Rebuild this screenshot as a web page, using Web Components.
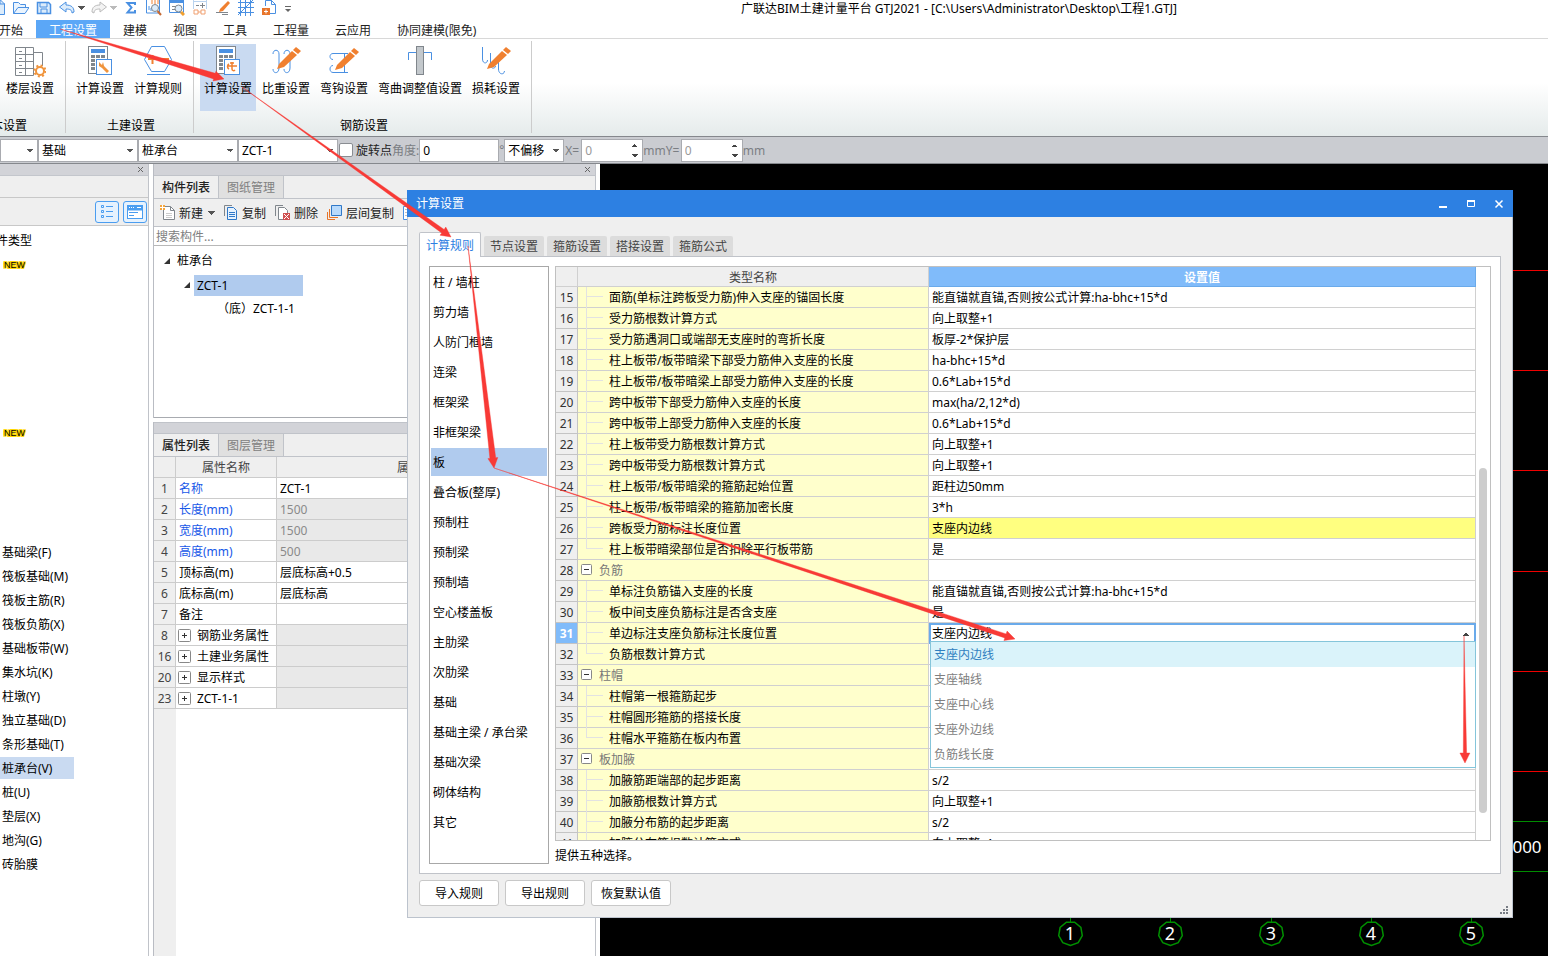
<!DOCTYPE html>
<html lang="zh-CN">
<head>
<meta charset="utf-8">
<title>广联达BIM土建计量平台 GTJ2021</title>
<style>
html,body{height:100%;margin:0}
body{font:12px/18px "Noto Sans","Noto Sans CJK SC",sans-serif;color:#000;background:#fff;overflow:hidden}
</style>
</head>
<body>
<gtj-app></gtj-app>
<script>
const BASE = `*{box-sizing:border-box}button,input,select{font:inherit;color:inherit;margin:0;padding:0;border:0;background:none;border-radius:0;outline:0}
ul{list-style:none;margin:0;padding:0}svg{display:block;flex:none}
.down{width:7px;height:4px;background:conic-gradient(from 315deg at 50% 100%,currentColor 90deg,transparent 0);flex:none}`;

function define(name, css, html){
  customElements.define(name, class extends HTMLElement{
    constructor(){
      super();
      const t = document.createElement('template');
      t.innerHTML = `<style>${BASE}${css}</style>${typeof html === 'function' ? html(this) : html}`;
      this.attachShadow({mode:'open'}).append(t.content.cloneNode(true));
    }
  });
}
const svg = (w,h,body) => `<svg width="${w}" height="${h}" viewBox="0 0 ${w} ${h}" fill="none" stroke-width="1" aria-hidden="true">${body}</svg>`;
const pencil = (x,y) => `<g transform="translate(${x} ${y})" fill="#f08030" stroke="none"><path d="M2 17 15 4 20 8 7 20 0 22Z"/><path d="M16 3 19 0 24 4 21 7Z"/></g>`;
const calc = `<rect x=".5" y=".5" width="19" height="27" fill="#fff" stroke="#80868c"/><rect x="3" y="3" width="14" height="4" fill="#4a90e2"/><g fill="#80868c"><path d="M3 9h4v3H3zM8 9h4v3H8zM13 9h4v3h-4zM3 13h4v3H3zM3 17h4v3H3zM3 21h4v3H3z"/></g><rect x="8.5" y="13.5" width="15" height="15" fill="#fff" stroke="#4a90e2"/>`;

/* ---------- title row ---------- */
define('quick-bar', `
:host{display:flex;height:20px;align-items:flex-start;background:#fff;overflow:hidden}
.tools{display:flex;gap:7px;margin-left:-10px;flex:none}
.tools button{height:16px;width:16px;flex:none}
.tools .drop{width:25px;display:flex;align-items:center;gap:3px;color:#555}
.tools .off{color:#bbb}
h1{flex:1;font:inherit;line-height:18px;margin:0;padding-left:70px;text-align:center;white-space:nowrap}`,
`<div class="tools">
<button aria-label="新建">${svg(16,16,'<path d="M2 14.5h12.5V4l-4-4H2M10 0v4h5" stroke="#4a90e2" fill="#dcecfb"/>')}</button>
<button aria-label="打开">${svg(16,16,'<path d="M.5 13.500V2.500h5l2 2h5v3M.5 13.500 5 7.500h11l-4 6z" stroke="#4a90e2" fill="#eaf4fe"/>')}</button>
<button aria-label="保存">${svg(16,16,'<path d="M1.500 2.500h11l2 2v9h-13z" stroke="#4a90e2" stroke-width="1.500" fill="#dcecfb"/><path d="M4 3v4h7V3M5 13v-4h6v4" stroke="#4a90e2"/>')}</button>
<button class="drop" aria-label="撤销">${svg(16,16,'<path d="M.5 7 7 2v3c5 0 8 2 8 7l-2 1c0-3-2-4-6-4v3z" stroke="#4a90e2" fill="#dcecfb"/>')}<span class="down"></span></button>
<button class="drop off" aria-label="恢复">${svg(16,16,'<path d="M15.500 7 9 2v3c-5 0-8 2-8 7l2 1c0-3 2-4 6-4v3z" stroke="#bbb" fill="#f3f3f3"/>')}<span class="down"></span></button>
<button aria-label="汇总计算">${svg(16,16,'<path d="M12 5V3H4.500l4 4.500-4 5H12V10" stroke="#4a90e2" stroke-width="2"/>')}</button>
<button aria-label="查看报表">${svg(16,16,'<path d="M.5-1v14h13V-1" stroke="#4a90e2"/><path d="M3 10V6M5 11V8" stroke="#4a90e2"/><path d="M5 1h8M5 3h8" stroke="#f08030" stroke-dasharray="2 1"/><circle cx="9" cy="8" r="3.500" fill="#dcecfb" stroke="#80868c"/><path d="m11.500 11 3.500 4" stroke="#c66a34" stroke-width="2"/>')}</button>
<button aria-label="查看计算式">${svg(16,16,'<path d="M.5.5h14v12H.5z" stroke="#4a90e2" fill="#fff"/><path d="M0 1.500h15" stroke="#4a90e2" stroke-width="3"/><path d="M3 6.500h4M3 9.500h3" stroke="#80868c"/><circle cx="9.500" cy="8.500" r="3.500" fill="#dcecfb" stroke="#80868c"/><path d="m12 12 3 3" stroke="#f0a030" stroke-width="3"/>')}</button>
<button aria-label="查看工程量">${svg(16,16,'<path d="M1.500-1v10M14.500-1v10M1 1.500h13" stroke="#b9d3ef"/><path d="M4 5.500h3M10.500 3v5M8 5.500h5" stroke="#80868c"/><path d="M2 10h4v4H2zM9 10h4v4H9zM6 12h3" stroke="#f0a070"/>')}</button>
<button aria-label="标注">${svg(16,16,'<path d="M5 9 13 1l2 2-7 8-4 1z" fill="#f08030"/><path d="M1 12.500h12M7 14.500h6" stroke="#80868c"/>')}</button>
<button aria-label="轴网">${svg(16,16,'<path d="M0 2.500h16M0 7.500h16M0 12.500h16M2.500 0v16M7.500 0v16M12.500 0v16M0 15 15 0" stroke="#4a90e2"/>')}</button>
<button aria-label="导入">${svg(16,16,'<path d="M4.500 6V.5h6l4 4v9H9" stroke="#4a90e2"/><path d="M10.500 0v4.500h4" stroke="#4a90e2"/><rect x="1" y="8" width="8" height="7" fill="#e8752a"/><path d="M3 11.500h4M5 9.500v4" stroke="#fff"/>')}</button>
<button aria-label="自定义">${svg(16,16,'<path d="M1 6.500h6" stroke="#666"/><path d="M1 9h6l-3 3z" fill="#666"/>')}</button>
</div>
<h1>广联达BIM土建计量平台 GTJ2021 - [C:\\Users\\Administrator\\Desktop\\工程1.GTJ]</h1>`.replaceAll('.500','.5'));

define('ribbon-tabs', `
:host{display:flex;height:19px;border-bottom:1px solid #d8d8d8;background:#fff;overflow:hidden;color:#222}
nav{display:flex;margin-left:-14px}
button{padding:2px 13px 0;line-height:17px;white-space:nowrap}
button[aria-current]{background:#5ba7f7;color:#fff}`,
`<nav>${['开始','工程设置','建模','视图','工具','工程量','云应用','协同建模(限免)'].map((t,i)=>`<button${i===1?' aria-current="page"':''}>${t}</button>`).join('')}</nav>`);

/* ---------- ribbon ---------- */
define('ribbon-button', `
:host{display:block}
button{display:flex;flex-direction:column;align-items:center;width:100%;height:67px;padding:2px 4px;gap:2px;white-space:nowrap}
:host([active]) button{background:#c9daf1}
.icon{height:32px;display:flex}`,
`<button><span class="icon"><slot name="icon"></slot></span><slot></slot></button>`);

define('ribbon-group', `
:host{display:flex;flex-direction:column;padding:0 8px 0 6px;background:linear-gradient(#ccc,#ccc) right 2px/1px 92px no-repeat}
.row{display:flex;gap:2px;padding-top:5px;height:78px}
.name{text-align:center;line-height:18px;white-space:nowrap;padding-left:4px}
:host([cut]){padding-left:2px}
:host([cut]) .name{text-align:left;margin-left:-15px}`,
el=>`<div class="row"><slot></slot></div><div class="name">${el.getAttribute('label')}</div>`);

define('ribbon-panel', `
:host{display:flex;height:97px;background:linear-gradient(#fff 45%,#e5ebeb);overflow:hidden}`,
`<ribbon-group label="本设置" cut>
 <ribbon-button><span slot="icon">${svg(32,32,'<path d="M1.5 1.5h18v28h-18zM1.5 8.5h18M1.5 15.500h18M1.5 22.500h18M11.5 1.5v28M20 6.5h8.5V20" stroke="#80868c"/><path d="M5 5.5h3M5 12.500h3M5 19.500h3M5 26.500h3" stroke="#80868c"/><circle cx="26" cy="25" r="4" stroke="#f0943c" stroke-width="2" fill="#fff"/><circle cx="26" cy="25" r="5.500" stroke="#f0943c" stroke-dasharray="2 2.300" stroke-width="2"/>')}</span>楼层设置</ribbon-button>
</ribbon-group>
<ribbon-group label="土建设置">
 <ribbon-button><span slot="icon">${svg(26,32,`<g transform="translate(1 0)">${calc}<path d="M11 16v4l3 2 5 5 2-2-5-5-1-4-1 3z" fill="#f0943c"/></g>`)}</span>计算设置</ribbon-button>
 <ribbon-button><span slot="icon">${svg(30,32,'<path d="M8.5.5h13l7 13-7 12h-13l-7-12z" stroke="#4a90e2"/><path d="M4 28.500h23" stroke="#4a90e2"/><path d="M5 13h9M9.5 9v9M17 13h9" stroke="#f08030" stroke-width="2"/>')}</span>计算规则</ribbon-button>
</ribbon-group>
<ribbon-group label="钢筋设置">
 <ribbon-button active><span slot="icon">${svg(26,32,`<g transform="translate(1 0)">${calc}<path d="M11 20h10M16 16v7c0 2 2 2 3 1M13 18c-2 1-2 4 0 5M14 17h4" stroke="#f08030" stroke-width="1.500"/></g>`)}</span>计算设置</ribbon-button>
 <ribbon-button><span slot="icon">${svg(30,32,`<path d="M2 8c0-5 6-5 6 0v14c0 6-6 6-6 1M13 8c0-5 6-5 6 0v14c0 6-6 6-6 1" stroke="#4a90e2"/>${pencil(6,1)}`)}</span>比重设置</ribbon-button>
 <ribbon-button><span slot="icon">${svg(30,32,`<path d="M19 7.500H4c-4 0-4 6 0 6M19 26.500H4c-4 0-4-7 0-7M15.500 7v19" stroke="#4a90e2"/>${pencil(6,2)}`)}</span>弯钩设置</ribbon-button>
 <ribbon-button><span slot="icon">${svg(30,32,'<path d="M3.500 14V6.500h23V14" stroke="#4a90e2"/><rect x="11.500" y=".5" width="7" height="28" fill="#c3c8cc" stroke="#80868c"/>')}</span>弯曲调整值设置</ribbon-button>
 <ribbon-button><span slot="icon">${svg(30,32,`<path d="M1.500 1v12c0 5 5 5 5 1M9.500 7v12c0 4 5 4 5 1M17.500 14v9c0 6 6 6 6 2" stroke="#4a90e2"/>${pencil(6,1)}`)}</span>损耗设置</ribbon-button>
</ribbon-group>`.replaceAll('.500','.5').replaceAll('.300','.3'));

/* ---------- option bar ---------- */
define('option-bar', `
:host{display:flex;align-items:center;height:28px;background:#caccd1;border-top:1px solid #85888d;border-bottom:1px solid #85888d;color:#7b7e83;white-space:nowrap;overflow:hidden}
select,.t{height:23px;border:1px solid #a9abb0;background:#fff;appearance:none;padding:0 3px;color:#000;flex:none}
select{padding-top:1px;background:#fff conic-gradient(from 315deg at 50% 100%,#555 90deg,transparent 0) right 4px center/6px 3px no-repeat;width:100px}
select.first{width:38px}select.off{width:60px;margin-right:1px}
input[type=checkbox]{appearance:none;width:14px;height:14px;border:1px solid #8a8d92;background:#fff;border-radius:2px;margin:0 3px 0 1px;flex:none}
label{display:flex;align-items:center;color:#222}
label span,label.g,.u{padding-top:2px}
label.g{color:#7b7e83}
.t{width:80px}
.deg{width:5px;overflow:hidden}
.n{width:62px;color:#9a9a9a;background:conic-gradient(from 315deg at 50% 100%,#444 90deg,transparent 0) right 4px bottom 4px/6px 3px no-repeat,conic-gradient(from 135deg at 50% 0,#444 90deg,transparent 0) right 4px top 4px/6px 3px no-repeat,#fff}
.n::-webkit-inner-spin-button{display:none}
.x{width:16px}.y{width:15px}`,
`<select class="first" aria-label="楼层"><option></option></select>
<select aria-label="类别"><option>基础</option></select><select aria-label="构件类型"><option>桩承台</option></select><select aria-label="构件"><option>ZCT-1</option></select>
<label><input type="checkbox"><span>旋转点</span></label><label class="g" for="ang">角度:</label><input class="t" id="ang" value="0"><span class="deg">°</span>
<select class="off" aria-label="偏移"><option>不偏移</option></select>
<label class="g x" for="ox">X=</label><input class="t n" id="ox" type="number" value="0"><span class="u">mm</span><label class="g y" for="oy">Y=</label><input class="t n" id="oy" type="number" value="0"><span class="u">mm</span>`);

/* ---------- left dock ---------- */
define('type-panel', `
:host{display:block;width:149px;flex:none;border-right:1px solid #c0c3c9;background:#fff;overflow:hidden}
.strip{height:12px;background:#d2d3d8;border-bottom:1px solid #c3c6cc;display:flex;justify-content:flex-end;align-items:center;padding-right:4px}
.blank{height:22px;background:#efefef;border-bottom:1px solid #c8c8c8}
.bar{height:28px;background:#efefef;border-bottom:1px solid #c8c8c8;display:flex;justify-content:flex-end;align-items:center;gap:4px;padding-right:1px}
.bar button{width:24px;height:22px;border:1px solid #4a9df0;border-radius:3px;background:#e6f2fe;display:grid;place-items:center}
ul{padding-top:2px}
li{height:24px;padding:1px 0}
li span{display:inline-block;line-height:20px;padding:2px 0 0 2px;white-space:nowrap}
li.sel span{width:74px;height:22px;background:#c9daf1}
li.head span{margin-left:-6px}
li b{font:9px/12px "Liberation Sans",sans-serif;display:inline-block;margin:6px 0 0 4px;text-shadow:1px 0 #ffd800,-1px 0 #ffd800,0 1px #ffd800,0 -1px #ffd800,1px 1px #ffd800,-1px -1px #ffd800,1px -1px #ffd800,-1px 1px #ffd800;vertical-align:top}`,
()=>{
  const rows = ['#件类型','*','','','','','','','*','','','','','基础梁(F)','筏板基础(M)','筏板主筋(R)','筏板负筋(X)','基础板带(W)','集水坑(K)','柱墩(Y)','独立基础(D)','条形基础(T)','桩承台(V)','桩(U)','垫层(X)','地沟(G)','砖胎膜'];
  return `<div class="strip">${svg(7,7,'<path d="M1 1l5 5M6 1 1 6" stroke="#666"/>')}</div><div class="blank"></div>
<div class="bar"><button aria-label="列表">${svg(14,14,'<path d="M1.5.5h2v2h-2zM1.5 5.5h2v2h-2zM1.5 10.5h2v2h-2z" stroke="#4a9df0"/><path d="M6 1.5h7M6 6.5h7M6 11.5h7" stroke="#4a9df0"/>')}</button><button aria-label="窗口">${svg(16,14,'<rect x=".5" y=".5" width="15" height="13" stroke="#4a9df0" fill="#fff"/><path d="M0 3h16" stroke="#4a9df0" stroke-width="5"/><path d="M2 2.5h1M4 2.5h1M6 2.5h1M10 2.5h4" stroke="#fff"/><path d="M2 7.5h9M2 10.5h5" stroke="#4a9df0"/>')}</button></div>
<ul>${rows.map(r=>r===''?'<li></li>':r==='*'?'<li><b>NEW</b></li>':r[0]==='#'?`<li class="head"><span>${r.slice(1)}</span></li>`:`<li${r.includes('V')?' class="sel"':''}><span>${r}</span></li>`).join('')}</ul>`;
});

/* ---------- dock section with two tabs ---------- */
define('dock-section', `
:host{display:flex;flex-direction:column;border-left:1px solid #b9bcc3;border-right:1px solid #c0c3c9;min-height:0}
.strip{height:12px;background:#d2d3d8;border-bottom:1px solid #c0c3c9;display:flex;justify-content:flex-end;align-items:center;padding-right:4px;flex:none}
:host([second]) .strip{border-top:1px solid #c0c3c9}
:host([second]) .strip svg{display:none}
.tabs{display:flex;height:23px;background:#efefef;border-bottom:1px solid #c0c3c9;flex:none}
.tabs button{width:65px;border-right:1px solid #c0c3c9;font-weight:500;line-height:20px;padding-top:2px;color:#222}
.tabs button+button{background:#e0e0e0;color:#808080;font-weight:400}`,
el=>`<div class="strip">${svg(7,7,'<path d="M1 1l5 5M6 1 1 6" stroke="#666"/>')}</div><div class="tabs" role="tablist"><button role="tab" aria-selected="true">${el.getAttribute('a')}</button><button role="tab">${el.getAttribute('b')}</button></div><slot></slot>`);

define('component-list', `
:host{display:flex;flex-direction:column;height:219px;border-bottom:1px solid #a8abb0}
.bar{display:flex;align-items:center;height:28px;background:#efefef;border-bottom:1px solid #c0c3c9;padding-left:6px;gap:9px;flex:none;color:#222}
.bar button{display:flex;align-items:center;gap:4px;white-space:nowrap}
.bar button span{padding-top:2px}
.bar .down{margin-left:1px;padding:0;color:#555}
input{height:19px;border-bottom:1px solid #b8b8b8;padding:1px 2px 0;width:100%;flex:none}
input::placeholder{color:#808080}
ul{padding-top:3px}
li{display:flex;align-items:center;height:24px;gap:6px;padding-left:10px}
.l2{padding-left:30px}.l3{padding-left:63px}
.l2 span{background:#b0cbee;width:109px;line-height:21px;padding-left:3px;margin-left:-3px}`,
`<div class="bar">
<button>${svg(15,15,'<path d="M3.500 1.500h7l4 4v9h-11z" stroke="#80868c" fill="#fff"/><path d="M10.500 1.500v4h4" stroke="#80868c"/><path d="M6 8.500h6M6 10.500h6M6 12.500h6" stroke="#ccc"/><path d="M0 0h5v5H0z" fill="#f5a53c"/><path d="M0 2.500h5M2.500 0v5" stroke="#fff"/>')}<span>新建</span><span class="down"></span></button>
<button>${svg(14,15,'<path d="M.500 11V.500H8" stroke="#80868c"/><path d="M3.500 2.500h6l3 3v9h-9z" stroke="#2f78c8" fill="#e6f2fe"/><path d="M5 7.500h6M5 9.500h6M5 11.500h6" stroke="#2f78c8"/>')}<span>复制</span></button>
<button>${svg(15,15,'<path d="M.500 11V.500H8" stroke="#80868c"/><path d="M3.500 2.500h6l3 3v9h-9z" stroke="#80868c" fill="#fff"/><path d="M8 8h7v7H8z" fill="#d05050"/><path d="m9 9 5 5M14 9l-5 5" stroke="#fff"/>')}<span>删除</span></button>
<button>${svg(15,15,'<path d="M4.500.500h10v10h-10z" stroke="#2f78c8" fill="#b8dafc"/><path d="M2.500 4v8.500H11M.500 7v7.500H8" stroke="#e8752a"/>')}<span>层间复制</span></button>
<button aria-label="更多">${svg(14,14,'<path d="M.500.500h13v13H.500z" stroke="#4a90e2" fill="#fff"/><path d="M3 3v8M6 3v8" stroke="#80868c" stroke-dasharray="1 2"/>')}</button></div>
<input placeholder="搜索构件..." aria-label="搜索构件">
<ul><li>${svg(7,7,'<path d="M6 0v6H0z" fill="#333"/>')}桩承台</li><li class="l2">${svg(7,7,'<path d="M6 0v6H0z" fill="#333"/>')}<span>ZCT-1</span></li><li class="l3">（底）ZCT-1-1</li></ul>`.replaceAll('.500','.5'));

define('property-table', `
:host{display:block;flex:1;background:linear-gradient(#efefef,#efefef) 0 0/22px 100% no-repeat #fff;min-height:0;overflow:hidden}
table{border-spacing:0;table-layout:fixed;width:100%}
th,td{height:21px;padding:2px 3px 0;border-right:1px solid #ccc;border-bottom:1px solid #ccc;line-height:18px;font-weight:400;white-space:nowrap;background:#fff;text-align:left}
thead th,tbody th{background:#efefef;color:#444;text-align:center;padding:2px 0 0}
td.k{color:#1858e8}td.g{background:#e9e9e9;color:#8a8a8a}
td.grp{padding-top:0}
.in{display:flex;align-items:center;gap:6px;margin-left:-1px;height:20px}
.in span{padding-top:2px}`,
()=>{
  const box = svg(13,13,'<rect x=".5" y=".5" width="12" height="12" rx="1" stroke="#888" fill="#fff"/><path d="M4 6.5h5M6.5 4v5" stroke="#333"/>');
  const r = [[1,'名称','ZCT-1','k',''],[2,'长度(mm)','1500','k','g'],[3,'宽度(mm)','1500','k','g'],[4,'高度(mm)','500','k','g'],[5,'顶标高(m)','层底标高+0.5','',''],[6,'底标高(m)','层底标高','',''],[7,'备注','','',''],[8,'+钢筋业务属性','','grp','g'],[16,'+土建业务属性','','grp','g'],[20,'+显示样式','','grp','g'],[23,'+ZCT-1-1','','grp','g']];
  return `<table><colgroup><col style="width:22px"><col style="width:101px"><col style="width:277px"><col></colgroup><thead><tr><th></th><th>属性名称</th><th>属性值</th><th></th></tr></thead><tbody>${r.map(([n,a,v,k,g])=>`<tr><th>${n}</th><td class="${k}">${a[0]==='+'?`<div class="in">${box}<span>${a.slice(1)}</span></div>`:a}</td><td class="${g}">${v}</td><td class="${g}"></td></tr>`).join('')}</tbody></table>`;
});

/* ---------- drawing canvas ---------- */
define('cad-canvas', `
:host{display:block;flex:1;background:#000;min-width:0}
svg{width:100%;height:100%}
text{font-size:18px;fill:#fff;text-anchor:middle}`,
()=>{
  let s='';
  for(const y of [106,206,306,407,507,607]) s+=`<path d="M0 ${y}.5h3000" stroke="#f00000"/>`;
  for(const y of [657,707]) s+=`<path d="M0 ${y}.5h3000" stroke="#008c00"/>`;
  [1,2,3,4,5].forEach((n,i)=>{
    const x=470+Math.round(i*100.3), p=[];
    for(let k=0;k<9;k++){const a=(k*40+90)*Math.PI/180;p.push((x+.5+12*Math.cos(a)).toFixed(1)+','+(769.5+12*Math.sin(a)).toFixed(1));}
    s+=`<path d="M${x}.5 740v18" stroke="#008c00"/><polygon points="${p.join(' ')}" stroke="#009000" stroke-width="1.5"/><text x="${x}" y="776">${n}</text>`;
  });
  return `<svg fill="none" stroke-width="1">${s}<text x="927" y="689" style="font-size:17px">000</text></svg>`;
});

/* ---------- dialog ---------- */
define('rule-list', `
:host{display:block;width:120px;flex:none;border:1px solid #a8a8a8;padding:1px;overflow:hidden}
li{height:28px;line-height:26px;margin-bottom:2px;padding:2px 0 0 2px;white-space:nowrap}
li[aria-selected]{background:#b0cbee}`,
`<ul role="listbox">${['柱 / 墙柱','剪力墙','人防门框墙','连梁','框架梁','非框架梁','板','叠合板(整厚)','预制柱','预制梁','预制墙','空心楼盖板','主肋梁','次肋梁','基础','基础主梁 / 承台梁','基础次梁','砌体结构','其它'].map(t=>`<li role="option"${t==='板'?' aria-selected="true"':''}>${t}</li>`).join('')}</ul>`);

define('rule-table', `
:host{display:flex;flex:1;min-height:0;border:1px solid #c0c0c0;overflow:hidden;position:relative}
.scroll{flex:1;min-width:0}
table{border-spacing:0;table-layout:fixed;width:100%}
th,td{height:21px;padding:2px 3px 0;border-right:1px solid #d0d0d0;border-bottom:1px solid #d0d0d0;line-height:18px;font-weight:400;white-space:nowrap;text-align:left}
thead th{background:#efefef;color:#444;text-align:center;height:20px;line-height:17px}
thead th.v{background:#80bbfa;color:#fff;border-color:#6aaaea;font-weight:700}
tbody th{background:#efefef;color:#333;text-align:center;padding:2px 0 0;border-color:#c4c4c4}
tbody th.on{background:#80bbfa;color:#fff;font-weight:700}
td.k{background:#ffffcc;padding:0}
.c{display:flex;align-items:center;height:20px}
.c span{padding-top:2px}
.c i{width:17px;height:21px;margin:0 6px 0 8px;flex:none;background:linear-gradient(#e2e2e2,#e2e2e2) 0 0/1px 100% no-repeat,linear-gradient(#e2e2e2,#e2e2e2) 0 9px/100% 1px no-repeat}
.c i.last{background-size:1px 9px,100% 1px}
.c svg{margin:0 7px 2px 3px}
.grp{color:#777}
td.hot{background:#ffff80}
td.edit{position:relative;padding:0;border:2px solid #6aaaea;border-bottom:0}
select{appearance:none;display:block;width:100%;height:19px;padding:0 0 1px 1px;background:#fff conic-gradient(from 135deg at 50% 0,#444 90deg,transparent 0) right 5px center/6px 3px no-repeat}
.menu{position:absolute;left:-1px;right:-2px;top:16px;border:1px solid #85c5da;background:#fff;z-index:1;color:#808080}
.menu li{height:25px;line-height:25px;padding-left:3px}
.menu li:first-child{background:#daf3fa;color:#2f7fc0}
.bar{width:14px;flex:none;padding:201px 3px 27px;display:flex}
.bar span{flex:1;background:#cdcdcd;border-radius:4px}`,
()=>{
  const Z='能直锚就直锚,否则按公式计算:ha-bhc+15*d';
  const d=[['面筋(单标注跨板受力筋)伸入支座的锚固长度',Z],['受力筋根数计算方式','向上取整+1'],['受力筋遇洞口或端部无支座时的弯折长度','板厚-2*保护层'],['柱上板带/板带暗梁下部受力筋伸入支座的长度','ha-bhc+15*d'],['柱上板带/板带暗梁上部受力筋伸入支座的长度','0.6*Lab+15*d'],['跨中板带下部受力筋伸入支座的长度','max(ha/2,12*d)'],['跨中板带上部受力筋伸入支座的长度','0.6*Lab+15*d'],['柱上板带受力筋根数计算方式','向上取整+1'],['跨中板带受力筋根数计算方式','向上取整+1'],['柱上板带/板带暗梁的箍筋起始位置','距柱边50mm'],['柱上板带/板带暗梁的箍筋加密长度','3*h'],['跨板受力筋标注长度位置','支座内边线'],['柱上板带暗梁部位是否扣除平行板带筋','是'],['-负筋',''],['单标注负筋锚入支座的长度',Z],['板中间支座负筋标注是否含支座','是'],['单边标注支座负筋标注长度位置','?'],['负筋根数计算方式',''],['-柱帽',''],['柱帽第一根箍筋起步',''],['柱帽圆形箍筋的搭接长度',''],['柱帽水平箍筋在板内布置',''],['-板加腋',''],['加腋筋距端部的起步距离','s/2'],['加腋筋根数计算方式','向上取整+1'],['加腋分布筋的起步距离','s/2'],['加腋分布筋根数计算方式','向上取整+1']];
  const box=svg(11,11,'<rect x=".5" y=".5" width="10" height="10" rx="1" stroke="#888" fill="#fff"/><path d="M3 5.5h5" stroke="#333"/>');
  const opts=['支座内边线','支座轴线','支座中心线','支座外边线','负筋线长度'];
  const edit=`<td class="edit"><select aria-label="单边标注支座负筋标注长度位置">${opts.map(o=>`<option>${o}</option>`).join('')}</select><ul class="menu" role="listbox">${opts.map(o=>`<li role="option">${o}</li>`).join('')}</ul></td>`;
  return `<div class="scroll"><table><colgroup><col style="width:22px"><col style="width:351px"><col></colgroup><thead><tr><th></th><th>类型名称</th><th class="v">设置值</th></tr></thead><tbody>${d.map(([a,v],i)=>{
    const n=i+15, g=a[0]==='-', last=d[i+1]&&d[i+1][0][0]==='-';
    return `<tr><th${n===31?' class="on"':''}>${n}</th><td class="k"><div class="c${g?' grp':''}">${g?`${box}<span>${a.slice(1)}</span>`:`<i${last?' class="last"':''}></i><span>${a}</span>`}</div></td>${v==='?'?edit:`<td${n===26?' class="hot"':''}>${v}</td>`}</tr>`;}).join('')}</tbody></table></div><div class="bar"><span></span></div>`;
});

define('calc-dialog', `
:host{display:flex;flex-direction:column;background:#efefef;border:1px solid #bcc3cd;border-top:0}
header{display:flex;align-items:center;height:27px;background:#2d80e2;color:#fff;padding:0 8px 0 9px;margin:0 -1px;flex:none}
header h2{flex:1;font:inherit;margin:0}
.w{display:flex;gap:16px}.w button{width:12px;height:12px}
.tabs{display:flex;gap:3px;align-items:flex-end;padding:15px 11px 0;flex:none;height:40px}
.tabs button{width:60px;height:20px;padding-top:2px;line-height:18px;background:#dcdcdc;color:#444;border-radius:2px 2px 0 0;margin-bottom:1px;white-space:nowrap}
.tabs .on{width:62px;height:25px;background:#fff;color:#2d80e2;border:1px solid #c0c3c9;border-bottom:0;margin-bottom:0;position:relative}
.panel{display:flex;gap:6px;flex:1;min-height:0;margin:-1px 11px 0;padding:9px;background:#fff;border:1px solid #c0c3c9}
.right{flex:1;display:flex;flex-direction:column;min-width:0}
.right p{margin:0;height:23px;padding-top:7px;line-height:16px}
footer{display:flex;gap:6px;padding:6px 11px 11px;flex:none;height:43px}
footer button{width:80px;height:26px;padding-top:2px;background:#fff;border:1px solid #c8c8c8;border-radius:3px;white-space:nowrap}
.grip{margin:auto -8px -9px auto}`,
`<header><h2>计算设置</h2><div class="w"><button aria-label="最小化">${svg(12,12,'<path d="M2 9h8" stroke="#fff" stroke-width="2"/>')}</button><button aria-label="最大化">${svg(12,12,'<path d="M2.5 3.5h7v5h-7z" stroke="#fff"/><path d="M2 3h8" stroke="#fff" stroke-width="2"/>')}</button><button aria-label="关闭">${svg(12,12,'<path d="m2.5 2.5 7 7M9.5 2.5l-7 7" stroke="#fff" stroke-width="1.5"/>')}</button></div></header>
<div class="tabs" role="tablist"><button role="tab" class="on">计算规则</button><button role="tab">节点设置</button><button role="tab">箍筋设置</button><button role="tab">搭接设置</button><button role="tab">箍筋公式</button></div>
<div class="panel"><rule-list></rule-list><div class="right"><rule-table></rule-table><p>提供五种选择。</p></div></div>
<footer><button>导入规则</button><button>导出规则</button><button>恢复默认值</button><span class="grip">${svg(9,9,'<path d="M6 0h2v2H6zM3 3h2v2H3zM6 3h2v2H6zM0 6h2v2H0zM3 6h2v2H3zM6 6h2v2H6z" fill="#777c84"/>')}</span></footer>`);

/* ---------- tapered guide arrows ---------- */
define('guide-arrows', `:host{display:block;pointer-events:none}svg{width:100%;height:100%}`,
()=>{
  const A=[[60,29,224,79,7],[242,87,451,237,5],[468,246,494,468,7],[494,468,1015,639,5],[1464,636,1465,763,4]];
  return `<svg fill="#f83a36">${A.map(([x,y,X,Y,w])=>{
    const L=Math.hypot(X-x,Y-y),u=(X-x)/L,v=(Y-y)/L,bx=X-u*10,by=Y-v*10,f=(k)=>`${(bx-v*k).toFixed(1)},${(by+u*k).toFixed(1)}`;
    return `<polygon points="${x},${y} ${f(w/2.4)} ${f(5)} ${X},${Y} ${f(-5)} ${f(-w/2.4)}" stroke="#f83a36" stroke-width=".4"/>`;}).join('')}</svg>`;
});

define('gtj-app', `
:host{display:flex;flex-direction:column;height:100vh;position:relative;overflow:hidden}
main{flex:1;display:flex;gap:4px;min-height:0}
.mid{width:443px;flex:none;display:flex;flex-direction:column;gap:4px}
.mid [second]{flex:1}
calc-dialog{position:absolute;left:407px;right:35px;top:190px;bottom:38px;z-index:1}
guide-arrows{position:absolute;inset:0;z-index:2}`,
`<quick-bar></quick-bar><ribbon-tabs></ribbon-tabs><ribbon-panel></ribbon-panel><option-bar></option-bar>
<main><type-panel></type-panel><div class="mid"><dock-section a="构件列表" b="图纸管理"><component-list></component-list></dock-section><dock-section second a="属性列表" b="图层管理"><property-table></property-table></dock-section></div><cad-canvas></cad-canvas></main>
<calc-dialog></calc-dialog><guide-arrows></guide-arrows>`);
</script>
</body>
</html>
